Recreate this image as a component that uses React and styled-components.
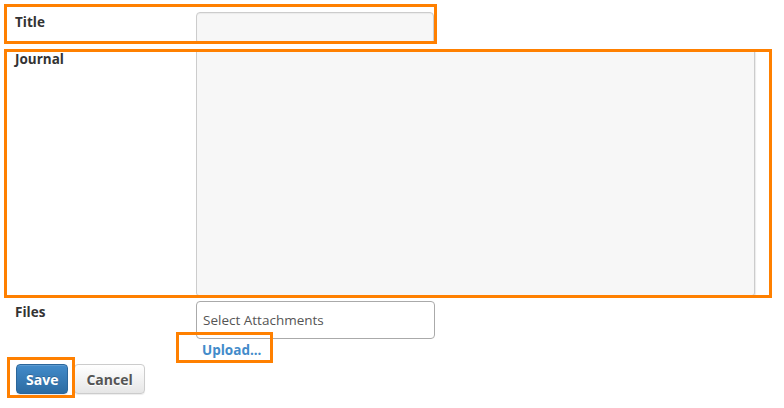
import React from 'react';
import styled, { createGlobalStyle } from 'styled-components';

const GlobalStyle = createGlobalStyle`
  html, body {
    margin: 0;
    padding: 0;
    background: #ffffff;
    font-family: "Open Sans", "Noto Sans", "Liberation Sans", sans-serif;
    color: #333333;
  }
`;

const Page = styled.div`
  position: relative;
  width: 784px;
  height: 408px;
  overflow: hidden;
`;

const Form = styled.form`
  display: grid;
  grid-template-columns: 181px 560px;
  padding: 12px 0 0 15px;
`;

const Label = styled.label`
  font-size: 13.5px;
  font-weight: 700;
  line-height: 18px;
  padding-top: ${p => p.$top || 1}px;
  color: #333333;
`;

const Field = styled.div`
  display: flex;
  flex-direction: column;
  align-items: flex-start;
  margin-bottom: ${p => p.$gap || 0}px;
`;

const TextInput = styled.input`
  box-sizing: border-box;
  width: 238px;
  height: 32px;
  border: 1px solid #cccccc;
  border-radius: 4px;
  background: #f7f7f7;
  box-shadow: inset 0 1px 1px rgba(0, 0, 0, 0.05);
  outline: none;
  padding: 0 6px;
`;

const TextArea = styled.textarea`
  box-sizing: border-box;
  width: 559px;
  height: 247px;
  border: 1px solid #cccccc;
  border-radius: 3px;
  background: #f7f7f7;
  box-shadow: 1px 1px 1px rgba(0, 0, 0, 0.08);
  resize: none;
  outline: none;
  display: block;
`;

const FileInput = styled.input`
  box-sizing: border-box;
  width: 239px;
  height: 38px;
  border: 1px solid #aaaaaa;
  border-radius: 4px;
  background: #ffffff;
  padding: 0 6px;
  font-family: "Open Sans", "Noto Sans", sans-serif;
  font-size: 13.5px;
  color: #555555;
  outline: none;

  &::placeholder {
    color: #555555;
  }
`;

const UploadLink = styled.a`
  margin: 2px 0 0 6px;
  font-size: 13.5px;
  font-weight: 700;
  line-height: 18px;
  color: #428bca;
  text-decoration: none;
`;

const Actions = styled.div`
  display: flex;
  gap: 6px;
  padding: 5px 0 0 16px;
`;

const Button = styled.button`
  box-sizing: border-box;
  height: 30px;
  padding: 0 ${p => (p.$primary ? 9 : 11)}px;
  border-radius: 4px;
  font-family: "Open Sans", "Noto Sans", sans-serif;
  font-size: 14px;
  font-weight: 700;
  cursor: pointer;
  border: 1px solid ${p => (p.$primary ? '#2b669a' : '#cccccc')};
  color: ${p => (p.$primary ? '#ffffff' : '#555555')};
  text-shadow: ${p => (p.$primary ? '0 -1px 0 rgba(0,0,0,0.2)' : '0 1px 0 #fff')};
  background: ${p =>
    p.$primary
      ? 'linear-gradient(to bottom, #428bca 0%, #2d6ca2 100%)'
      : 'linear-gradient(to bottom, #ffffff 0%, #e6e6e6 100%)'};
  box-shadow: inset 0 1px 0 rgba(255, 255, 255, 0.15), 0 1px 1px rgba(0, 0, 0, 0.075);
`;

const Highlight = styled.div`
  position: absolute;
  box-sizing: border-box;
  border: 3px solid #ff8000;
  pointer-events: none;
  left: ${p => p.$x}px;
  top: ${p => p.$y}px;
  width: ${p => p.$w}px;
  height: ${p => p.$h}px;
`;

const App = () => {
  return (
    <>
      <GlobalStyle />
      <Page>
        <Form>
          <Label>Title</Label>
          <Field $gap={5}>
            <TextInput type="text" />
          </Field>

          <Label>Journal</Label>
          <Field $gap={5}>
            <TextArea />
          </Field>

          <Label $top={2}>Files</Label>
          <Field>
            <FileInput type="text" placeholder="Select Attachments" />
            <UploadLink href="#">Upload...</UploadLink>
          </Field>
        </Form>
        <Actions>
          <Button type="button" $primary>Save</Button>
          <Button type="button">Cancel</Button>
        </Actions>

        <Highlight $x={4} $y={4} $w={433} $h={40} />
        <Highlight $x={4} $y={49} $w={768} $h={249} />
        <Highlight $x={176} $y={332} $w={97} $h={31} />
        <Highlight $x={7} $y={357} $w={68} $h={41} />
      </Page>
    </>
  );
};

export default App;
